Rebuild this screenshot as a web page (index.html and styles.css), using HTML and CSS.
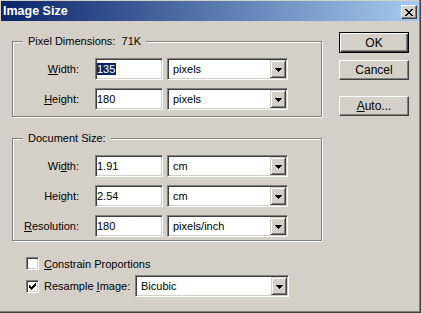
FILE: index.html
```html
<!DOCTYPE html>
<html>
<head>
<meta charset="utf-8">
<link rel="stylesheet" href="styles.css">
</head>
<body>
<div class="window">
  <div class="titlebar">
    <span class="title">Image Size</span>
    <span class="close"><svg width="8" height="7" viewBox="0 0 8 7" shape-rendering="crispEdges"><path d="M0 0h2v1h-2z M6 0h2v1h-2z M1 1h2v1h-2z M5 1h2v1h-2z M2 2h4v1h-4z M3 3h2v1h-2z M2 4h4v1h-4z M1 5h2v1h-2z M5 5h2v1h-2z M0 6h2v1h-2z M6 6h2v1h-2z" fill="#000"/></svg></span>
  </div>
  <div class="body">
    <div class="left">
      <div class="group">
        <div class="legend">Pixel Dimensions:&nbsp; 71K</div>
        <div class="row">
          <span class="lbl"><u>W</u>idth:</span>
          <div class="input"><span class="hl">135</span></div>
          <div class="select"><span class="val">pixels</span><span class="drop"><svg width="7" height="4" viewBox="0 0 7 4" shape-rendering="crispEdges"><path d="M0 0h7v1h-7z M1 1h5v1h-5z M2 2h3v1h-3z M3 3h1v1h-1z" fill="#000"/></svg></span></div>
        </div>
        <div class="row">
          <span class="lbl"><u>H</u>eight:</span>
          <div class="input">180</div>
          <div class="select"><span class="val">pixels</span><span class="drop"><svg width="7" height="4" viewBox="0 0 7 4" shape-rendering="crispEdges"><path d="M0 0h7v1h-7z M1 1h5v1h-5z M2 2h3v1h-3z M3 3h1v1h-1z" fill="#000"/></svg></span></div>
        </div>
      </div>
      <div class="group g2">
        <div class="legend">Document Size:</div>
        <div class="row">
          <span class="lbl">Wi<u>d</u>th:</span>
          <div class="input">1.91</div>
          <div class="select"><span class="val">cm</span><span class="drop"><svg width="7" height="4" viewBox="0 0 7 4" shape-rendering="crispEdges"><path d="M0 0h7v1h-7z M1 1h5v1h-5z M2 2h3v1h-3z M3 3h1v1h-1z" fill="#000"/></svg></span></div>
        </div>
        <div class="row">
          <span class="lbl">Hei<u>g</u>ht:</span>
          <div class="input">2.54</div>
          <div class="select"><span class="val">cm</span><span class="drop"><svg width="7" height="4" viewBox="0 0 7 4" shape-rendering="crispEdges"><path d="M0 0h7v1h-7z M1 1h5v1h-5z M2 2h3v1h-3z M3 3h1v1h-1z" fill="#000"/></svg></span></div>
        </div>
        <div class="row">
          <span class="lbl"><u>R</u>esolution:</span>
          <div class="input">180</div>
          <div class="select"><span class="val">pixels/inch</span><span class="drop"><svg width="7" height="4" viewBox="0 0 7 4" shape-rendering="crispEdges"><path d="M0 0h7v1h-7z M1 1h5v1h-5z M2 2h3v1h-3z M3 3h1v1h-1z" fill="#000"/></svg></span></div>
        </div>
      </div>
      <div class="checks">
        <div class="crow first">
          <span class="cb"></span>
          <span><u>C</u>onstrain Proportions</span>
        </div>
        <div class="crow second">
          <span class="cb"><svg width="7" height="7" viewBox="0 0 7 7" shape-rendering="crispEdges"><path d="M6 0h1v1h-1z M5 1h2v1h-2z M0 2h1v1h-1z M4 2h3v1h-3z M0 3h2v1h-2z M3 3h3v1h-3z M0 4h5v1h-5z M1 5h3v1h-3z M2 6h1v1h-1z" fill="#000"/></svg></span>
          <span class="rlabel">Resample <u>I</u>mage:</span>
          <div class="select wide"><span class="val">Bicubic</span><span class="drop"><svg width="7" height="4" viewBox="0 0 7 4" shape-rendering="crispEdges"><path d="M0 0h7v1h-7z M1 1h5v1h-5z M2 2h3v1h-3z M3 3h1v1h-1z" fill="#000"/></svg></span></div>
        </div>
      </div>
    </div>
    <div class="right">
      <div class="btn default">OK</div>
      <div class="btn cancel">Cancel</div>
      <div class="btn auto"><u>A</u>uto...</div>
    </div>
  </div>
</div>
</body>
</html>
```
FILE: styles.css
```css
* { box-sizing: border-box; }
body {
  margin: 0;
  font: 11px "Liberation Sans", Arial, sans-serif;
  color: #000;
  background: #d4d0c8;
}
.window {
  width: 421px;
  height: 313px;
  background: #d4d0c8;
  padding: 1px 1px 0 1px;
  border-right: 1px solid #404040;
  border-bottom: 1px solid #404040;
  box-shadow: inset -1px -1px 0 #808080;
}
.titlebar {
  height: 20px;
  display: flex;
  align-items: flex-start;
  background: linear-gradient(to right, #0a246a, #a6caf0);
  padding: 0 2px;
}
.title {
  flex: 1;
  color: #fff;
  font-weight: bold;
  font-size: 12.5px;
  line-height: 21px;
}
.close {
  width: 16px;
  height: 14px;
  margin-top: 4px;
  background: #d4d0c8;
  border-top: 1px solid #fff;
  border-left: 1px solid #fff;
  border-right: 1px solid #404040;
  border-bottom: 1px solid #404040;
  box-shadow: inset -1px -1px 0 #808080;
  display: flex;
  align-items: center;
  justify-content: center;
  padding-right: 1px;
}
.close svg { display: block; }
.body {
  display: flex;
  padding-left: 11px;
}
.left {
  width: 310px;
  padding-top: 20px;
}
.right {
  margin-left: 17px;
  padding-top: 11px;
  display: flex;
  flex-direction: column;
}
.group {
  position: relative;
  border: 1px solid #808080;
  box-shadow: inset 1px 1px 0 #fff, 1px 1px 0 #fff;
  padding: 16px 0 6px 0;
}
.g2 {
  margin-top: 21px;
  padding-bottom: 3px;
}
.legend {
  position: absolute;
  left: 10px;
  top: -7px;
  padding: 0 5px;
  background: #d4d0c8;
  line-height: 13px;
}
.row {
  display: flex;
  align-items: center;
  height: 22px;
}
.row + .row { margin-top: 8px; }
.lbl {
  width: 66px;
  text-align: right;
  margin-right: 16px;
}
.input, .select, .cb {
  background: #fff;
  border-top: 1px solid #808080;
  border-left: 1px solid #808080;
  border-right: 1px solid #fff;
  border-bottom: 1px solid #fff;
  box-shadow: inset 1px 1px 0 #404040, inset -1px -1px 0 #d4d0c8;
}
.input {
  width: 68px;
  height: 22px;
  padding-left: 1px;
  display: flex;
  align-items: center;
}
.hl {
  background: #0a246a;
  color: #fff;
  line-height: 12px;
  padding-right: 1px;
}
.select {
  width: 121px;
  height: 22px;
  margin-left: 4px;
  padding: 1px;
  display: flex;
  align-items: center;
}
.select .val {
  flex: 1;
  padding-left: 4px;
}
.drop {
  width: 16px;
  height: 18px;
  background: #d4d0c8;
  border-top: 1px solid #d4d0c8;
  border-left: 1px solid #d4d0c8;
  border-right: 1px solid #404040;
  border-bottom: 1px solid #404040;
  box-shadow: inset 1px 1px 0 #fff, inset -1px -1px 0 #808080;
  display: flex;
  align-items: center;
  justify-content: center;
  padding-top: 1px;
}
.drop svg, .cb svg { display: block; }
.checks { padding-left: 14px; }
.crow {
  display: flex;
  align-items: center;
}
.crow.first { margin-top: 16px; height: 13px; }
.crow.second { margin-top: 5px; height: 22px; }
.cb {
  width: 13px;
  height: 13px;
  margin-right: 5px;
  display: flex;
  align-items: center;
  justify-content: center;
}
.rlabel { width: 91px; }
.select.wide {
  width: 154px;
  margin-left: 0;
}
.btn {
  width: 70px;
  height: 20px;
  display: flex;
  align-items: center;
  justify-content: center;
  background: #d4d0c8;
  border-top: 1px solid #fff;
  border-left: 1px solid #fff;
  border-right: 1px solid #404040;
  border-bottom: 1px solid #404040;
  box-shadow: inset -1px -1px 0 #808080;
  font-size: 12px;
}
.btn.default {
  height: 21px;
  border: 1px solid #000;
  box-shadow: inset 1px 1px 0 #fff, inset -1px -1px 0 #404040, inset -2px -2px 0 #808080;
}
.btn.cancel { margin-top: 7px; }
.btn.auto { margin-top: 16px; }
```
